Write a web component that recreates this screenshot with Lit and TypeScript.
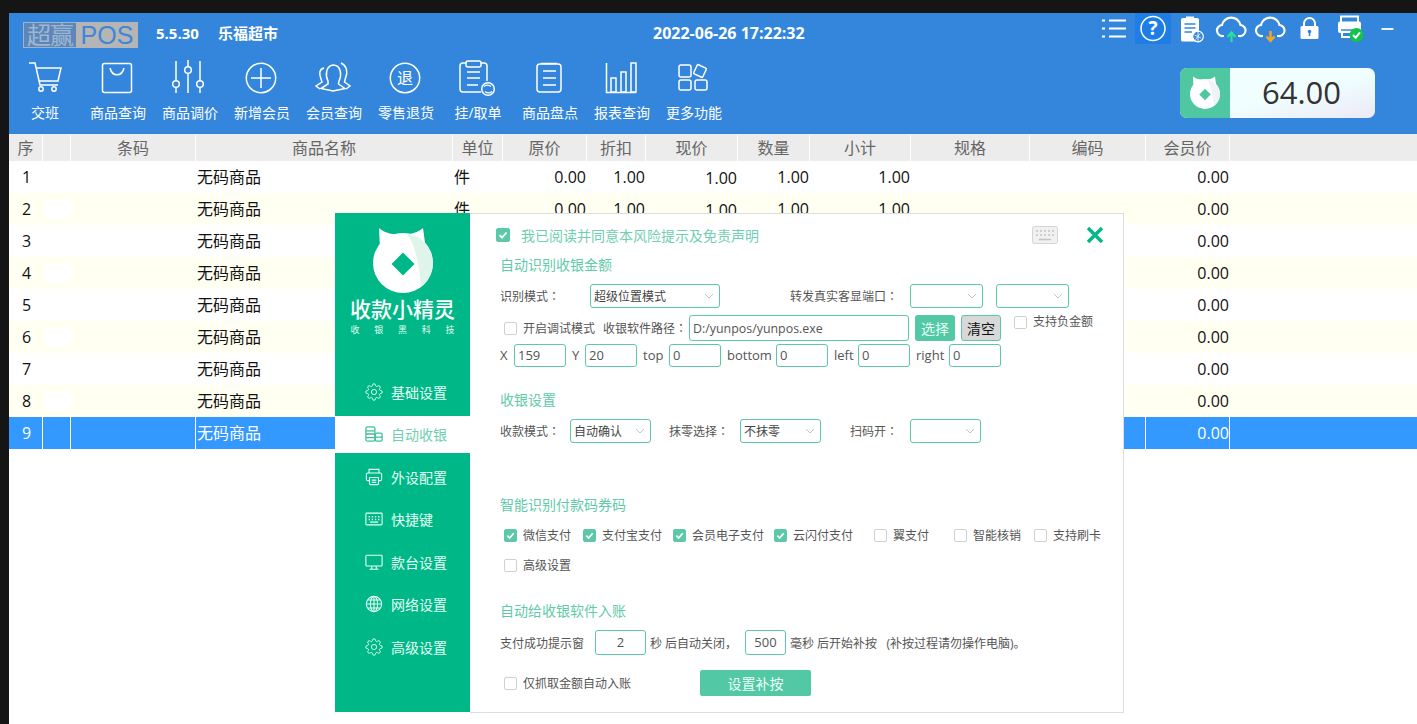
import { LitElement, html, css } from "lit";
import { customElement } from "lit/decorators.js";

const gearPath = "M19.4 15a1.65 1.65 0 0 0 .33 1.82l.06.06a2 2 0 0 1 0 2.83 2 2 0 0 1-2.83 0l-.06-.06a1.65 1.65 0 0 0-1.82-.33 1.65 1.65 0 0 0-1 1.51V21a2 2 0 0 1-2 2 2 2 0 0 1-2-2v-.09A1.65 1.65 0 0 0 9 19.4a1.65 1.65 0 0 0-1.82.33l-.06.06a2 2 0 0 1-2.83 0 2 2 0 0 1 0-2.83l.06-.06a1.65 1.65 0 0 0 .33-1.82 1.65 1.65 0 0 0-1.51-1H3a2 2 0 0 1-2-2 2 2 0 0 1 2-2h.09A1.65 1.65 0 0 0 4.6 9a1.65 1.65 0 0 0-.33-1.82l-.06-.06a2 2 0 0 1 0-2.83 2 2 0 0 1 2.83 0l.06.06a1.65 1.65 0 0 0 1.82.33H9a1.65 1.65 0 0 0 1-1.51V3a2 2 0 0 1 2-2 2 2 0 0 1 2 2v.09a1.65 1.65 0 0 0 1 1.51 1.65 1.65 0 0 0 1.82-.33l.06-.06a2 2 0 0 1 2.83 0 2 2 0 0 1 0 2.83l-.06.06a1.65 1.65 0 0 0-.33 1.82V9a1.65 1.65 0 0 0 1.51 1H21a2 2 0 0 1 2 2 2 2 0 0 1-2 2h-.09a1.65 1.65 0 0 0-1.51 1z";

const toolIcons = [
  html`<svg class="ti" viewBox="0 0 40 40"><path d="M4 5H10L15 27H33M11 10H36L33 23H14"/><circle cx="16" cy="31" r="2.2"/><circle cx="29" cy="31" r="2.2"/></svg>`,
  html`<svg class="ti" viewBox="0 0 40 40"><rect x="5.5" y="5.5" width="29" height="29" rx="2"/><path d="M13 10c2 9 12 9 14 0"/></svg>`,
  html`<svg class="ti" viewBox="0 0 40 40"><path d="M7 3V22.5M7 29.5V35M19 2V8.5M19 15.5V35M31 3V22.5M31 29.5V35"/><circle cx="7" cy="26" r="3.3"/><circle cx="19" cy="12" r="3.3"/><circle cx="31" cy="26" r="3.3"/></svg>`,
  html`<svg class="ti" viewBox="0 0 40 40"><circle cx="20" cy="20" r="14.7"/><path d="M10 20H30M20 10V30"/></svg>`,
  html`<svg class="ti" viewBox="0 0 40 40"><path d="M15 23C12 17 13 8 20 7C28 7 29 17 26 23L25.500 26L32 30.500L20 33L8 30.500L15 26Z"/><path d="M11 10C6 11 6 16 8 21L9 24L3 28L7 31M28 5C34 8 35 14 32.500 20L31.500 24L37 28L33 31"/></svg>`,
  html`<svg class="ti" viewBox="0 0 40 40"><circle cx="20" cy="20" r="14.7"/><text x="20" y="25.500" class="tt">退</text></svg>`,
  html`<svg class="ti" viewBox="0 0 40 40"><path d="M24 34H6a3 3 0 0 1-3-3V8a3 3 0 0 1 3-3H9M24 5h3a3 3 0 0 1 3 3V23"/><rect x="9" y="3" width="15" height="6" rx="2"/><path d="M10 14H23M10 20H23M10 27H21"/><circle cx="31" cy="31" r="6.300"/><path d="M27 28.500a5 5 0 0 1 7 0M35 33.500a5 5 0 0 1-7 0" stroke-width="1.200"/></svg>`,
  html`<svg class="ti" viewBox="0 0 40 40"><rect x="8" y="6" width="24" height="28" rx="3"/><path d="M12 5.500H28M14 13H27M14 20H27M14 27H27" /></svg>`,
  html`<svg class="ti" viewBox="0 0 40 40"><path d="M5.500 5V34.500H35"/><rect x="10" y="20" width="5" height="14"/><rect x="20" y="14" width="5" height="20"/><rect x="30" y="5" width="5" height="29"/></svg>`,
  html`<svg class="ti" viewBox="0 0 40 40"><rect x="6" y="7" width="12" height="12" rx="2"/><rect x="6" y="22" width="12" height="10" rx="2"/><rect x="22" y="22" width="12" height="10" rx="2"/><rect x="22" y="8" width="10" height="10" rx="1" transform="rotate(25 27 13)"/></svg>`,
];
const toolLabels = ["交班", "商品查询", "商品调价", "新增会员", "会员查询", "零售退货", "挂/取单", "商品盘点", "报表查询", "更多功能"];

const fox = (bg: string, wedge: string) => html`<svg viewBox="0 0 64 70" class="fox">
  <path d="M8 2C13 6 18 8 25 8L9 24Z" fill="#fff" />
  <path d="M52 2C47 6 42 8 35 8L55 24Z" fill="#fff" />
  <circle cx="32" cy="37" r="30" fill="#fff" />
  <path d="M36 7.500A30 30 0 0 1 50 61C49 45 45 20 36 7.500Z" fill="${wedge}" />
  <path d="M32 26.500L43.500 38L32 49.500L20.500 38Z" fill="${bg}" />
</svg>`;

const topIcons = [
  html`<svg class="tr" viewBox="0 0 39 31"><path d="M7 7.500H10M14 7.500H31M7 15.500H10M14 15.500H31M7 23.500H10M14 23.500H31" stroke="#fff" stroke-width="1.800" fill="none"/></svg>`,
  html`<div class="help"><svg class="tr" viewBox="0 0 36 31"><circle cx="18" cy="15.500" r="12" stroke="#fff" stroke-width="1.500" fill="none"/><text x="18" y="22" class="qm">?</text></svg></div>`,
  html`<svg class="tr" viewBox="0 0 39 31"><path d="M8 7a2 2 0 0 1 2-2h3V3.500h8V5h3a2 2 0 0 1 2 2V27a1.500 1.500 0 0 1-1.500 1.500H9.500A1.500 1.500 0 0 1 8 27Z" fill="#fff"/><path d="M11.500 11H22.500M11.500 15H22.500M11.500 19H19" stroke="#3486dc" stroke-width="1.600"/><circle cx="25" cy="23.500" r="5.300" fill="#3486dc" stroke="#fff" stroke-width="1.200"/><path d="M21.500 22L28 25M22.500 26.500L27 20.500M25 18.500V28" stroke="#fff" stroke-width="0.800"/></svg>`,
  html`<svg class="tr" viewBox="0 0 39 31"><path d="M12 23H11a5.500 5.500 0 0 1-1-11a9.500 9.500 0 0 1 18.500 0a5.500 5.500 0 0 1-1 11H26" stroke="#fff" stroke-width="2.200" fill="none"/><path d="M19.500 29V21M15.500 24L19.500 19.500L23.500 24" stroke="#25e29a" stroke-width="2.200" fill="none"/></svg>`,
  html`<svg class="tr" viewBox="0 0 39 31"><path d="M12 23H11a5.500 5.500 0 0 1-1-11a9.500 9.500 0 0 1 18.500 0a5.500 5.500 0 0 1-1 11H26" stroke="#fff" stroke-width="2.200" fill="none"/><path d="M19.500 18V27M15.500 23.500L19.500 28L23.500 23.500" stroke="#f5a623" stroke-width="2.400" fill="none"/></svg>`,
  html`<svg class="tr" viewBox="0 0 39 31"><path d="M14 14V10.500a5.500 5.500 0 0 1 11 0V14" stroke="#fff" stroke-width="2" fill="none"/><rect x="10.500" y="13" width="18" height="13" rx="1.500" fill="#fff"/><circle cx="19.500" cy="18.500" r="1.800" fill="#3486dc"/><rect x="18.700" y="19" width="1.600" height="4" fill="#3486dc"/></svg>`,
  html`<svg class="tr" viewBox="0 0 39 31"><g transform="translate(-2 0)"><path d="M14 9V3.500H31V9" stroke="#fff" stroke-width="2" fill="none"/><path d="M13 8.500H32a2 2 0 0 1 2 2V20H13a2 2 0 0 1-2-2V10.500a2 2 0 0 1 2-2Z" fill="#fff"/><path d="M15 17V24H25" stroke="#fff" stroke-width="2" fill="none"/><path d="M14 17H30" stroke="#3486dc" stroke-width="1.500"/><circle cx="29.500" cy="22" r="7" fill="#14c34a"/><path d="M26 22L28.700 24.800L33 19.300" stroke="#fff" stroke-width="2" fill="none"/></g></svg>`,
  html`<svg class="tr" viewBox="0 0 39 31"><path d="M13.500 16H25.500" stroke="#fff" stroke-width="1.800"/></svg>`,
];

const cols = [
  { h: "序", a: "seq" }, { h: "", a: "blank" }, { h: "条码", a: "l" }, { h: "商品名称", a: "l" }, { h: "单位", a: "l" },
  { h: "原价", a: "r" }, { h: "折扣", a: "r" }, { h: "现价", a: "r low" }, { h: "数量", a: "r" }, { h: "小计", a: "r" },
  { h: "规格", a: "l" }, { h: "编码", a: "l" }, { h: "会员价", a: "r" }, { h: "", a: "l" },
];

const menu = [
  { t: "基础设置", i: html`<svg class="mi" viewBox="0 0 24 24"><path d="${gearPath}"/><circle cx="12" cy="12" r="3.500"/></svg>` },
  { t: "自动收银", on: true, i: html`<svg class="mi" viewBox="0 0 20 20"><rect x="1" y="2" width="10" height="16" rx="2"/><path d="M1 6.500H11M1 10H11M1 14H11"/><rect x="11.500" y="9" width="7.500" height="9" rx="1.500"/><path d="M12 13.500H19"/></svg>` },
  { t: "外设配置", i: html`<svg class="mi" viewBox="0 0 20 20"><path d="M5 14H3a1.500 1.500 0 0 1-1.500-1.500V7A1.500 1.500 0 0 1 3 5.500H17A1.500 1.500 0 0 1 18.500 7V12.500A1.500 1.500 0 0 1 17 14H15"/><path d="M4.500 5.500V1.500H15.500V5.500"/><rect x="5" y="10.500" width="10" height="8" rx="1"/><path d="M7.500 13.500H12.500M7.500 16H12.500"/></svg>` },
  { t: "快捷键", i: html`<svg class="mi" viewBox="0 0 20 20"><rect x="1" y="3.500" width="18" height="13" rx="1"/><path d="M4 7.500H5.500M7.500 7.500H9M11 7.500H12.500M14.500 7.500H16M4 10.500H5.500M7.500 10.500H9M11 10.500H12.500M14.500 10.500H16M5.500 13.500H14.500" stroke-width="1.500"/></svg>` },
  { t: "款台设置", i: html`<svg class="mi" viewBox="0 0 20 20"><rect x="1" y="2.500" width="18" height="12" rx="1"/><path d="M7.500 14.500V18M12.500 14.500V18M5 18H15"/></svg>` },
  { t: "网络设置", i: html`<svg class="mi" viewBox="0 0 20 20"><circle cx="10" cy="10" r="8.500"/><ellipse cx="10" cy="10" rx="4" ry="8.500"/><path d="M10 1.500V18.500M1.500 10H18.500M3 5.500H17M3 14.500H17"/></svg>` },
  { t: "高级设置", i: html`<svg class="mi" viewBox="0 0 24 24"><path d="${gearPath}"/><circle cx="12" cy="12" r="3.500"/></svg>` },
];

const payA = [
  { t: "微信支付", c: true }, { t: "支付宝支付", c: true }, { t: "会员电子支付", c: true }, { t: "云闪付支付", c: true },
  { t: "翼支付" }, { t: "智能核销" }, { t: "支持刷卡" },
];

const offsets = [
  { l: "X", v: "159" }, { l: "Y", v: "20" }, { l: "top", v: "0" }, { l: "bottom", v: "0" }, { l: "left", v: "0" }, { l: "right", v: "0" },
];

const tick = html`<svg class="tick" viewBox="0 0 12 12"><path d="M2.500 6.200L5 8.700L9.500 3.500"/></svg>`;
const chevron = html`<svg class="chev" viewBox="0 0 10 6"><path d="M1 1L5 5L9 1"/></svg>`;
const colon = html`<span class="colon">：</span>`;

@customElement("app-root")
export class AppRoot extends LitElement {
  static styles = css`
    :host {
      display: block; position: relative; width: 1417px; height: 724px; overflow: hidden;
      background: #151515; font-family: "Open Sans", "Noto Sans CJK SC", sans-serif; color: #555;
      padding: 13px 0 0 9px; box-sizing: border-box;
    }
    .app { background: #fff; height: 711px; }
    .head { background: #3486dc; height: 121px; color: #fff; }
    .top { height: 39px; display: flex; align-items: flex-start; padding-left: 14px; position: relative; }
    .logo { margin-top: 9px; height: 26px; width: 115px; display: flex; font-size: 24px; line-height: 26px; box-sizing: border-box; }
    .logo-a { width: 53px; box-sizing: border-box; border: 1px solid #9db3cc; border-right: none; color: #9fb6d3; background: #5d87b8; text-align: center; font-size: 24px; line-height: 24px; letter-spacing: -1px; }
    .logo-b { flex: 1; background: #b5b5b5; color: #3f86d8; text-align: center; font-family: "Liberation Sans", sans-serif; font-size: 25px; }
    .ver { margin: 10px 0 0 18px; font-weight: 700; font-size: 15px; line-height: 20px; width: 62px; }
    .shop { margin-top: 10px; font-weight: 700; font-size: 15px; line-height: 20px; width: 435px; }
    .time { margin-top: 10px; font-weight: 700; font-size: 16px; line-height: 20px; width: 441.500px; white-space: nowrap; }
    .tops { display: flex; align-items: flex-start; }
    .tr { display: block; width: 39px; height: 31px; }
    .help { width: 36px; height: 31px; background: #1f7ee6; margin: 0 1.500px; }
    .help .tr { width: 36px; }
    .qm { font-size: 19px; font-weight: 700; fill: #fff; text-anchor: middle; }
    .tool { display: flex; position: relative; height: 82px; }
    .item { width: 72px; padding-top: 6px; display: flex; flex-direction: column; align-items: center; }
    .item + .item .lab { margin-left: 2px; }
    .ti { width: 40px; height: 40px; display: block; fill: none; stroke: #fff; stroke-width: 1.500; }
    .tt { font-size: 16px; fill: #fff; stroke: none; text-anchor: middle; font-family: "Noto Sans CJK SC", sans-serif; }
    .lab { font-size: 14px; line-height: 20px; margin-top: 5px; white-space: nowrap; }
    .amount { position: absolute; left: 1171px; top: 16px; width: 195px; height: 50px; border-radius: 7px; background: linear-gradient(165deg, #f0feff 55%, #ece9f8); display: flex; overflow: hidden; }
    .amt-ic { width: 50px; background: #4fc7a0; display: flex; align-items: center; justify-content: center; }
    .amt-ic .fox { width: 32px; height: 36px; }
    .amt-v { flex: 1; text-align: center; font-size: 31px; line-height: 49px; color: #333; padding-right: 2px; box-sizing: border-box; }
    .row { display: grid; grid-template-columns: 34px 28px 125px 257px 50px 84px 59px 92px 72px 101px 119px 116px 84px 1fr; height: 32px; background: #fff; color: #111; font-size: 16px; line-height: 32px; }
    .row.alt { background: #fffff2; }
    .row.sel { background: #3399ff; color: #fff; }
    .row.hd { height: 27px; background: #ececec; color: #666; font-size: 16px; line-height: 28px; }
    .c { box-sizing: border-box; white-space: nowrap; position: relative; }
    .hd .c { text-align: center; border-right: 1px solid #fff; margin: 1px 0; line-height: 26px; padding: 0; }
    .hd .c:last-child { border-right: none; }
    .seq { padding-left: 13px; }
    .l { padding-left: 1px; }
    .r { text-align: right; padding-right: 1px; }
    .low { padding-top: 1px; }
    .sel .edge { border-right: 1px solid #fff; padding-right: 0; }
    .patch { position: absolute; left: 1px; top: 7px; width: 27px; height: 18px; background: #fff; }
    .dlg { position: absolute; left: 335px; top: 213px; width: 789px; height: 500px; display: flex; background: #fff; }
    .side { width: 135px; height: 499px; background: #00b887; color: #fff; display: flex; flex-direction: column; align-items: center; padding-top: 13px; box-sizing: border-box; }
    .side .fox { width: 64px; height: 70px; display: block; }
    .brand { font-size: 21px; line-height: 26px; margin-top: 0; color: #fff; font-weight: 500; }
    .sub { width: 104px; display: flex; justify-content: space-between; font-size: 9px; line-height: 12px; margin-top: 2px; color: #e2fff5; }
    .menu { width: 100%; margin-top: 37px; display: flex; flex-direction: column; gap: 5.500px; }
    .mitem { height: 37px; display: flex; align-items: center; gap: 8px; padding-left: 30px; font-size: 14px; color: #e3fff5; }
    .mitem.on { background: #fff; color: #6fcfb0; }
    .mi { width: 18px; height: 18px; fill: none; stroke: currentColor; stroke-width: 1.200; flex: none; }
    .mitem.on .mi { stroke: #3fc09a; stroke-width: 1.400; }
    .main { flex: 1; border: 1px solid #ddd; border-left: none; padding: 9px 0 0 30px; box-sizing: border-box; font-size: 12px; color: #555; }
    .hrow { display: flex; align-items: center; height: 24px; margin-left: -4px; padding-right: 19px; }
    .hrow .box { width: 14px; height: 14px; }
    .agree { margin-left: 11px; font-size: 14px; color: #6fcfb0; }
    .kb { margin-left: auto; width: 26px; height: 18px; margin-right: 28px; }
    .x { width: 18px; height: 18px; }
    .title { height: 20px; line-height: 20px; font-size: 14px; color: #5fcba9; }
    .t1 { margin-top: 8px; } .t2 { margin-top: 23px; } .t3 { margin-top: 52px; } .t4 { margin-top: 26px; }
    .colon { font-family: "Noto Sans CJK TC", sans-serif; }
    .fr { display: flex; align-items: center; white-space: nowrap; }
    .f1 { margin-top: 9px; height: 24px; }
    .f2 { margin-top: 7px; height: 26px; padding-left: 4px; }
    .f3 { margin-top: 3px; height: 23px; display: grid; grid-template-columns: 14px 52px 19px 52px 32px 52px 55px 52px 30px 52px 39px 52px; align-items: center; font-size: 13px; }
    .f3 span { margin-top: -2px; }
    .f3 .oth { padding-left: 6px; }
    .f5 { margin-top: 9px; height: 25px; }
    .f6 { margin-top: 15px; height: 26px; padding-left: 4px; }
    .sel-b { box-sizing: border-box; height: 100%; border: 1px solid #5cc8a8; border-radius: 3px; display: flex; align-items: center; justify-content: space-between; padding: 0 5px 0 3px; background: #fff; color: #444; }
    .chev { width: 10px; height: 6px; fill: none; stroke: #c5c5c5; stroke-width: 1; flex: none; }
    .inp { box-sizing: border-box; height: 100%; border: 1px solid #5cc8a8; border-radius: 3px; padding: 0 3px; line-height: 21px; background: #fff; color: #555; font-size: 13px; display: flex; align-items: center; }
    .f3 .inp { height: 23px; }
    .ctr { justify-content: center; font-size: 13px; color: #555; }
    .btn { box-sizing: border-box; height: 26px; width: 40px; border-radius: 3px; display: flex; align-items: center; justify-content: center; font-size: 14px; }
    .go { background: #52c8a5; color: #e8fff7; margin-left: 6px; }
    .clr { background: #d8d8d8; color: #111; border: 1px solid #5cc8a8; margin-left: 6px; }
    .box { box-sizing: border-box; width: 13px; height: 13px; border: 1.500px solid #d0d0d0; border-radius: 2px; background: #fff; flex: none; display: flex; }
    .box.on { background: #5cc8a8; border-color: #5cc8a8; }
    .tick { width: 100%; height: 100%; fill: none; stroke: #fff; stroke-width: 1.800; }
    .ck { display: flex; align-items: center; gap: 6px; white-space: nowrap; }
    .pay { display: grid; grid-template-columns: 79px 90px 101px 100px 80px 80px 1fr; padding-left: 4px; margin-top: 10px; height: 20px; align-items: center; }
    .p3 { margin-top: 10px; }
    .w70 { width: 70px; } .w90 { width: 90px; } .w71 { width: 71px; margin-left: 18px; } .w60 { width: 60px; margin-left: 29px; }
    .w95 { width: 95px; } .w120 { width: 120px; margin-left: 70px; }
    .s130 { width: 130px; } .s73 { width: 73px; } .s81 { width: 81px; } .s71 { width: 71px; } .ml13 { margin-left: 13px; }
    .path { margin-left: 8px; width: 86px; }
    .pathv { width: 220px; font-size: 12.400px; }
    .neg { align-self: flex-start; margin: 1px 0 0 13px; align-items: flex-start; }
    .neg .lbl { margin-top: -2px; line-height: 16px; }
    .in51 { width: 51px; } .in41 { width: 41px; }
    .after { margin-left: 4px; }
    .after1 { width: 95px; }
    .auto { width: 196px; }
    .go2 { width: 111px; height: 26px; background: #52c8a5; color: #eafff8; font-size: 14px; border-radius: 2px; display: flex; align-items: center; justify-content: center; }
  `;

  private check(c?: boolean) {
    return html`<span class="box ${c ? "on" : ""}">${c ? tick : ""}</span>`;
  }

  private sel(cls: string, text = "") {
    return html`<div class="sel-b ${cls}"><span>${text}</span>${chevron}</div>`;
  }

  render() {
    const rows = Array.from({ length: 9 }, (_, i) => i);
    return html`
      <div class="app">
        <div class="head">
          <div class="top">
            <div class="logo"><div class="logo-a">超赢</div><div class="logo-b">POS</div></div>
            <div class="ver">5.5.30</div>
            <div class="shop">乐福超市</div>
            <div class="time">2022-06-26 17:22:32</div>
            <div class="tops">${topIcons}</div>
          </div>
          <div class="tool">
            ${toolIcons.map((ic, i) => html`<div class="item">${ic}<div class="lab">${toolLabels[i]}</div></div>`)}
            <div class="amount"><div class="amt-ic">${fox("#4fc7a0", "#eef3f5")}</div><div class="amt-v">64.00</div></div>
          </div>
        </div>
        <div class="row hd">${cols.map((c) => html`<div class="c">${c.h}</div>`)}</div>
        ${rows.map((i) => {
          // Rows 3-9 sit behind the dialog in the middle columns, so those cells show nothing.
          const mid = i < 2 ? ["件", "0.00", "1.00", "1.00", "1.00", "1.00"] : ["", "", "", "", "", ""];
          const vals = [String(i + 1), "", "", "无码商品", ...mid, "", "", "0.00", ""];
          const sel = i === 8;
          const alt = i % 2 === 1;
          return html`<div class="row ${alt ? "alt" : ""} ${sel ? "sel" : ""}">
            ${vals.map((v, k) => html`<div class="c ${cols[k].a} ${[0, 1, 2, 11, 12].includes(k) ? "edge" : ""}">${v}${k === 1 && alt ? html`<span class="patch"></span>` : ""}</div>`)}
          </div>`;
        })}
      </div>

      <div class="dlg">
        <aside class="side">
          ${fox("#00b887", "#dff5ec")}
          <div class="brand">收款小精灵</div>
          <div class="sub"><span>收</span><span>银</span><span>黑</span><span>科</span><span>技</span></div>
          <nav class="menu">${menu.map((m) => html`<div class="mitem ${m.on ? "on" : ""}">${m.i}<span>${m.t}</span></div>`)}</nav>
        </aside>
        <section class="main">
          <div class="hrow">
            ${this.check(true)}
            <span class="agree">我已阅读并同意本风险提示及免责声明</span>
            <svg class="kb" viewBox="0 0 26 18"><rect x="0.500" y="0.500" width="25" height="17" rx="2" fill="#f1f1f1" stroke="#d5d5d5"/><path d="M4 5H6M8 5H10M12 5H14M16 5H18M20 5H22M4 9H6M8 9H10M12 9H14M16 9H18M20 9H22M7 13.500H19" stroke="#c4c4c4" stroke-width="1.600"/></svg>
            <svg class="x" viewBox="0 0 18 18"><path d="M2 2L16 16M16 2L2 16" stroke="#00b887" stroke-width="3.400" fill="none"/></svg>
          </div>
          <div class="title t1">自动识别收银金额</div>
          <div class="fr f1">
            <span class="w90">识别模式${colon}</span>${this.sel("s130", "超级位置模式")}
            <span class="w120">转发真实客显端口${colon}</span>${this.sel("s73")}<span class="ml13"></span>${this.sel("s73")}
          </div>
          <div class="fr f2">
            <span class="ck">${this.check()}<span>开启调试模式</span></span>
            <span class="path">收银软件路径${colon}</span>
            <div class="inp pathv">D:/yunpos/yunpos.exe</div>
            <div class="btn go">选择</div>
            <div class="btn clr">清空</div>
            <span class="ck neg">${this.check()}<span class="lbl">支持负金额</span></span>
          </div>
          <div class="f3">
            ${offsets.map((o, i) => html`<span class="${i ? "oth" : ""}">${o.l}</span><div class="inp">${o.v}</div>`)}
          </div>
          <div class="title t2">收银设置</div>
          <div class="fr f1">
            <span class="w70">收款模式${colon}</span>${this.sel("s81", "自动确认")}
            <span class="w71">抹零选择${colon}</span>${this.sel("s81", "不抹零")}
            <span class="w60">扫码开${colon}</span>${this.sel("s71")}
          </div>
          <div class="title t3">智能识别付款码券码</div>
          <div class="pay">${payA.map((p) => html`<span class="ck">${this.check(p.c)}<span>${p.t}</span></span>`)}</div>
          <div class="pay p3"><span class="ck">${this.check()}<span>高级设置</span></span></div>
          <div class="title t4">自动给收银软件入账</div>
          <div class="fr f5">
            <span class="w95">支付成功提示窗</span>
            <div class="inp in51 ctr">2</div>
            <span class="after after1">秒 后自动关闭，</span>
            <div class="inp in41 ctr">500</div>
            <span class="after">毫秒 后开始补按&nbsp;&nbsp; (补按过程请勿操作电脑)。</span>
          </div>
          <div class="fr f6">
            <span class="ck auto">${this.check()}<span>仅抓取金额自动入账</span></span>
            <div class="go2">设置补按</div>
          </div>
        </section>
      </div>
    `;
  }
}
